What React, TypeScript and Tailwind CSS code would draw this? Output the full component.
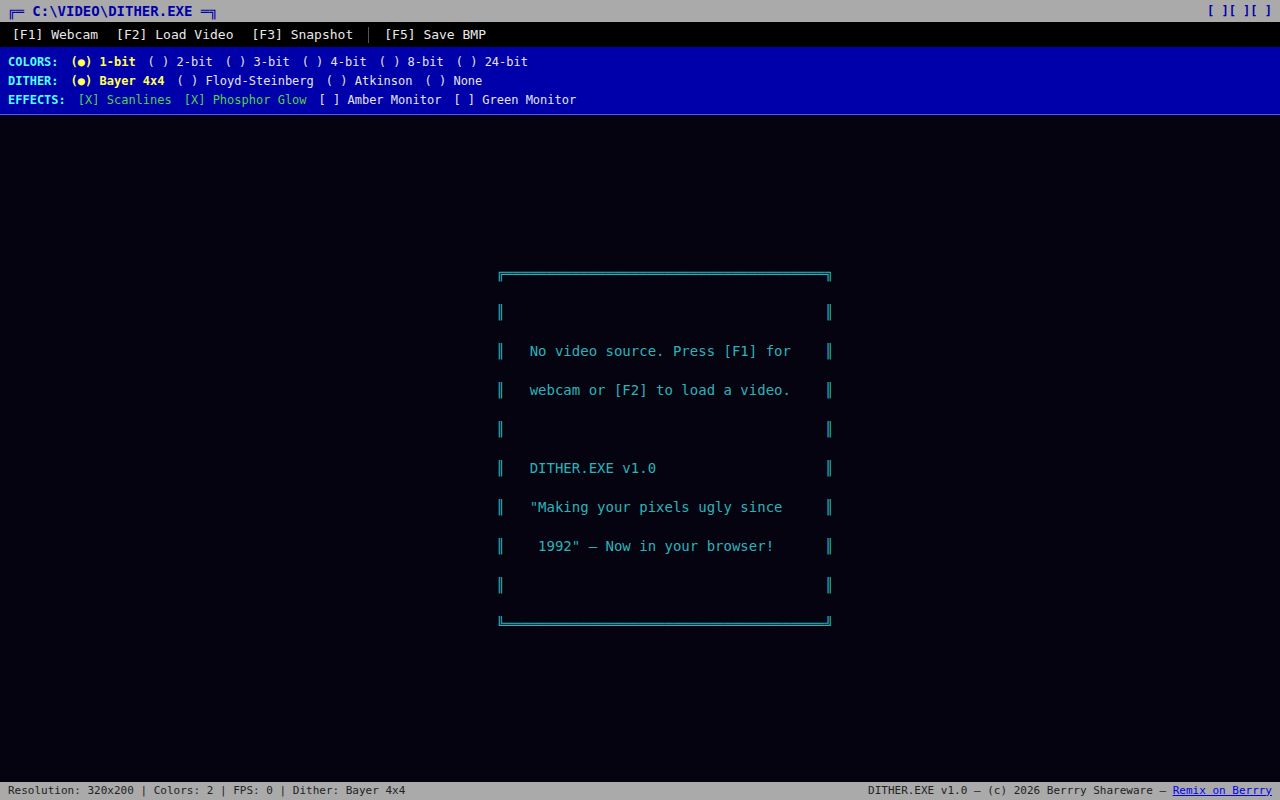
import React from "react";

const mono = { fontFamily: '"DejaVu Sans Mono", "Liberation Mono", monospace' };

const boxLines = [
  "╔══════════════════════════════════════╗",
  "║                                      ║",
  "║   No video source. Press [F1] for    ║",
  "║   webcam or [F2] to load a video.    ║",
  "║                                      ║",
  "║   DITHER.EXE v1.0                    ║",
  "║   \"Making your pixels ugly since     ║",
  "║    1992\" — Now in your browser!      ║",
  "║                                      ║",
  "╚══════════════════════════════════════╝",
];

function Option({ label, selected }: { label: string; selected?: boolean }) {
  if (selected) {
    return <span className="font-bold text-[#ffff55]">(●) {label}</span>;
  }
  return <span className="text-[#e4e4e4]">( ) {label}</span>;
}

function Check({ label, checked }: { label: string; checked?: boolean }) {
  if (checked) {
    return <span className="text-[#4fd34f]">[X] {label}</span>;
  }
  return <span className="text-[#e4e4e4]">[ ] {label}</span>;
}

export default function App() {
  return (
    <div className="h-screen w-full flex flex-col bg-[#04030f] overflow-hidden" style={mono}>
      {/* title bar */}
      <div className="h-[22px] flex items-center justify-between bg-[#aaaaaa] pl-[7px] pr-2 text-[#0000aa] font-bold">
        <span className="text-[14px] whitespace-pre">╔═ C:\VIDEO\DITHER.EXE ═╗</span>
        <span className="text-[12px] whitespace-pre">[ ][ ][ ]</span>
      </div>

      {/* menu */}
      <div className="h-[25px] flex items-center bg-black pl-3 text-[13px] text-[#e8e8e8] whitespace-pre">
        <span>[F1] Webcam</span>
        <span className="ml-[18px]">[F2] Load Video</span>
        <span className="ml-[18px]">[F3] Snapshot</span>
        <div className="ml-[15px] w-px h-[16px] bg-[#555555]" />
        <span className="ml-[15px]">[F5] Save BMP</span>
      </div>

      {/* options panel */}
      <div className="bg-[#0000aa] border-b border-[#5555ff] px-2 py-[5px] text-[12px] whitespace-pre">
        <div className="h-[19px] flex items-center gap-3">
          <span className="font-bold text-[#55ffff]">COLORS:</span>
          <Option label="1-bit" selected />
          <Option label="2-bit" />
          <Option label="3-bit" />
          <Option label="4-bit" />
          <Option label="8-bit" />
          <Option label="24-bit" />
        </div>
        <div className="h-[19px] flex items-center gap-3">
          <span className="font-bold text-[#55ffff]">DITHER:</span>
          <Option label="Bayer 4x4" selected />
          <Option label="Floyd-Steinberg" />
          <Option label="Atkinson" />
          <Option label="None" />
        </div>
        <div className="h-[19px] flex items-center gap-3">
          <span className="font-bold text-[#55ffff]">EFFECTS:</span>
          <Check label="Scanlines" checked />
          <Check label="Phosphor Glow" checked />
          <Check label="Amber Monitor" />
          <Check label="Green Monitor" />
        </div>
      </div>

      {/* viewport */}
      <div className="flex-1 flex items-center justify-center pl-[49px]">
        <pre className="text-[14px] leading-[39px] text-[#2bb3bb] m-0" style={mono}>
          {boxLines.join("\n")}
        </pre>
      </div>

      {/* status bar */}
      <div className="h-[18px] flex items-center justify-between bg-[#aaaaaa] px-2 text-[11px] text-[#222222] whitespace-pre">
        <span>Resolution: 320x200 | Colors: 2 | FPS: 0 | Dither: Bayer 4x4</span>
        <span>
          DITHER.EXE v1.0 — (c) 2026 Berrry Shareware —{" "}
          <a href="#" className="text-[#0000ee] underline">Remix on Berrry</a>
        </span>
      </div>
    </div>
  );
}
